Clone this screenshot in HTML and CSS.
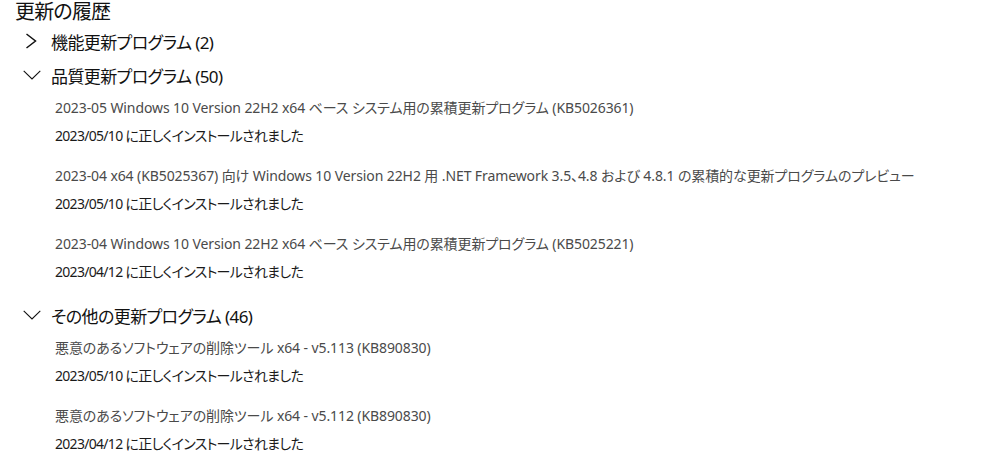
FILE: index.html
```html
<!DOCTYPE html>
<html lang="ja">
<head>
<meta charset="utf-8">
<title>更新の履歴</title>
<link rel="stylesheet" href="styles.css">
</head>
<body>
<main class="page">
  <h1 class="title">更新の履歴</h1>

  <section class="group">
    <div class="group-head">
      <span class="chev"><svg class="chev-right" width="12" height="16" viewBox="0 0 12 16"><path d="M1.5 1 L10.5 8 L1.5 15" fill="none" stroke="#111" stroke-width="1.5"/></svg></span>
      <span class="group-name">機能更新プログラム (2)</span>
    </div>
  </section>

  <section class="group">
    <div class="group-head">
      <span class="chev"><svg class="chev-down" width="18" height="10" viewBox="0 0 18 10"><path d="M0.7 0.8 L9 9 L17.3 0.8" fill="none" stroke="#111" stroke-width="1.1"/></svg></span>
      <span class="group-name">品質更新プログラム (50)</span>
    </div>
    <ul class="items">
      <li class="item">
        <div class="item-name">2023-05 Windows 10 Version 22H2 x64 ベース システム用の累積更新プログラム (KB5026361)</div>
        <div class="item-date">2023/05/10 に正しくインストールされました</div>
      </li>
      <li class="item">
        <div class="item-name">2023-04 x64 (KB5025367) 向け Windows 10 Version 22H2 用 .NET Framework 3.5、4.8 および 4.8.1 の累積的な更新プログラムのプレビュー</div>
        <div class="item-date">2023/05/10 に正しくインストールされました</div>
      </li>
      <li class="item">
        <div class="item-name">2023-04 Windows 10 Version 22H2 x64 ベース システム用の累積更新プログラム (KB5025221)</div>
        <div class="item-date">2023/04/12 に正しくインストールされました</div>
      </li>
    </ul>
  </section>

  <section class="group">
    <div class="group-head">
      <span class="chev"><svg class="chev-down" width="18" height="10" viewBox="0 0 18 10"><path d="M0.7 0.8 L9 9 L17.3 0.8" fill="none" stroke="#111" stroke-width="1.1"/></svg></span>
      <span class="group-name">その他の更新プログラム (46)</span>
    </div>
    <ul class="items">
      <li class="item">
        <div class="item-name">悪意のあるソフトウェアの削除ツール x64 - v5.113 (KB890830)</div>
        <div class="item-date">2023/05/10 に正しくインストールされました</div>
      </li>
      <li class="item">
        <div class="item-name">悪意のあるソフトウェアの削除ツール x64 - v5.112 (KB890830)</div>
        <div class="item-date">2023/04/12 に正しくインストールされました</div>
      </li>
    </ul>
  </section>
</main>
</body>
</html>
```

FILE: styles.css
```css
html, body {
  margin: 0;
  padding: 0;
  background: #ffffff;
}

body {
  font-family: "Noto Sans", "Noto Sans CJK JP", sans-serif;
  font-feature-settings: "palt";
  color: #000;
  overflow: hidden;
}

.page {
  width: 1000px;
  height: 458px;
}

.title {
  margin: 0;
  padding-left: 15px;
  height: 24px;
  line-height: 24px;
  font-size: 20px;
  font-weight: normal;
  letter-spacing: -0.8px;
  color: #111;
}

.group-head {
  display: flex;
  align-items: center;
  height: 34px;
  padding-left: 23px;
}

.chev {
  width: 28px;
  display: flex;
  align-items: center;
}

.chev-right {
  margin-left: 2px;
}

.group-name {
  font-size: 17px;
  letter-spacing: -0.6px;
  color: #111;
  white-space: nowrap;
}

.items {
  list-style: none;
  margin: 0 0 11px 0;
  padding: 2px 0 0 55px;
}

.item {
  margin-bottom: 12px;
}

.item-name,
.item-date {
  height: 28px;
  line-height: 28px;
  font-size: 14px;
  white-space: nowrap;
}

.item-name {
  letter-spacing: -0.1px;
  color: #4a4a4a;
}

.item-date {
  letter-spacing: -0.7px;
  color: #1a1a1a;
}
```
